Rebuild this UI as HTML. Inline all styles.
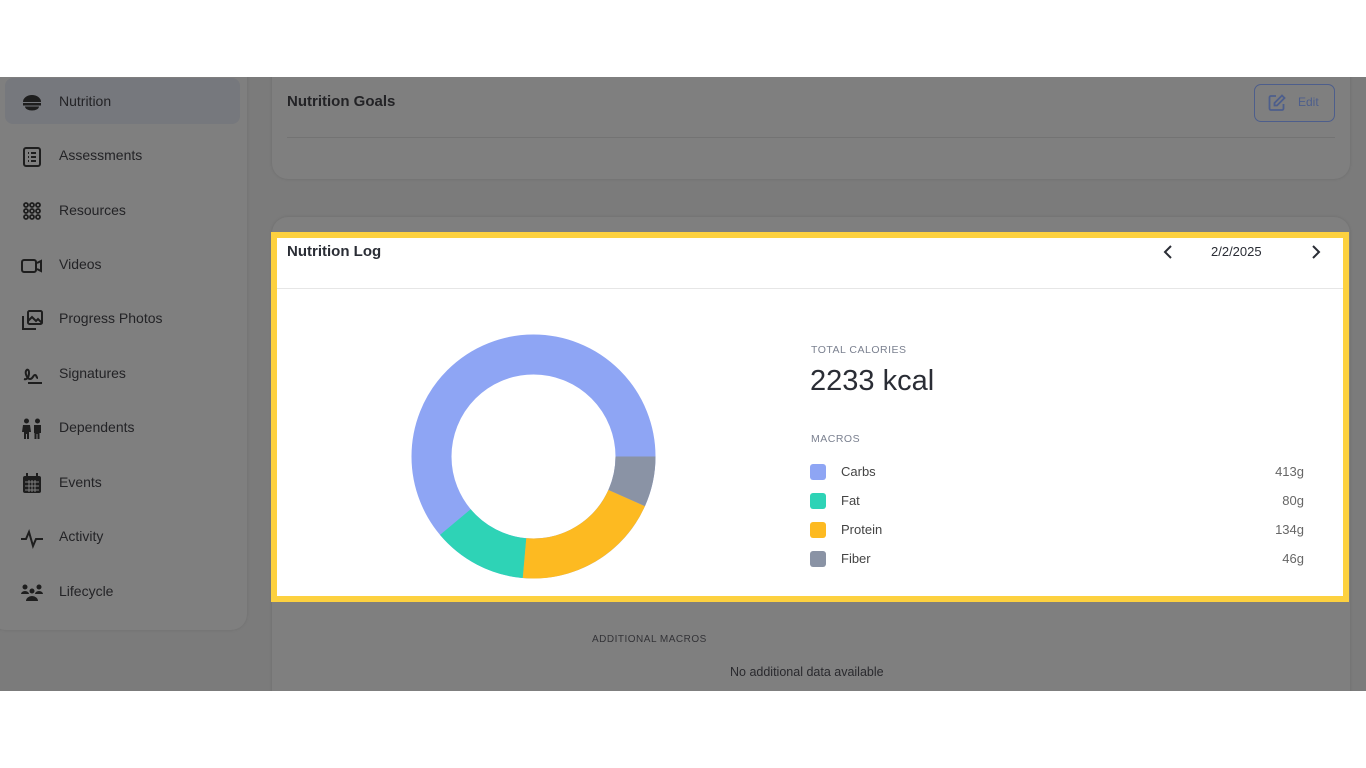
<!DOCTYPE html>
<html><head><meta charset="utf-8"><style>
*{margin:0;padding:0;box-sizing:border-box}
body{width:1366px;height:768px;background:#fff;font-family:"Liberation Sans",sans-serif;position:relative;overflow:hidden}
.app{position:absolute;left:0;top:77px;width:1366px;height:614px;background:#7b7b7b;overflow:hidden}
.side{position:absolute;left:-10px;top:-20px;width:257px;height:573px;background:#7f7f7f;border-radius:16px;box-shadow:0 0 3px rgba(0,0,0,.1)}
.sel{position:absolute;left:15px;top:21px;width:235px;height:46px;background:#76787d;border-radius:8px}
.item{position:absolute;left:59px;font-size:14px;color:#232326;white-space:nowrap}
.ic{position:absolute;left:20px;width:24px;height:24px}
.card1{position:absolute;left:272px;top:-20px;width:1078px;height:122px;background:#7f7f7f;border-radius:16px;box-shadow:0 0 3px rgba(0,0,0,.12)}
.card2{position:absolute;left:272px;top:140px;width:1078px;height:520px;background:#7f7f7f;border-radius:16px;box-shadow:0 0 3px rgba(0,0,0,.12)}
.hl{position:absolute;left:271px;top:232px;width:1078px;height:370px;border:6px solid #fdd13f;background:#fff}
.t{position:absolute;color:#2a2d35;white-space:nowrap}
</style></head><body>
<div class="app">
<div class="side">
<div class="sel"></div>
</div>
<div class="card1"></div>
<div style="position:absolute;left:287px;top:60px;width:1048px;height:1px;background:#737373"></div>
<div class="t" style="left:287px;top:16px;font-size:15px;font-weight:bold;color:#232326">Nutrition Goals</div>
<div style="position:absolute;left:1254px;top:7px;width:81px;height:38px;border:1.5px solid #4d5e8c;border-radius:7px"></div>
<svg style="position:absolute;left:1267px;top:16px" width="20" height="20" viewBox="0 0 20 20" fill="none" stroke="#4d5e8c" stroke-width="1.8"><path d="M9 3H4a1.5 1.5 0 0 0-1.5 1.5v11A1.5 1.5 0 0 0 4 17h11a1.5 1.5 0 0 0 1.5-1.5V11"/><path d="M15 2.5l2.5 2.5L10 12.5H7.5V10z"/></svg>
<div class="t" style="left:1298px;top:18px;font-size:12px;color:#4d5e8c">Edit</div>
<div class="card2"></div>
<div class="t" style="left:592px;top:557px;font-size:10px;letter-spacing:.5px;color:#333337">ADDITIONAL MACROS</div>
<div class="t" style="left:730px;top:588px;font-size:12.5px;color:#2a2a2e">No additional data available</div>
</div>
<div style="position:absolute;left:0;top:77px">
<svg class="ic" style="top:14px" viewBox="0 0 24 24" fill="#1e1e1e"><path d="M3 11a9 7 0 0 1 18 0z"/><rect x="3" y="12" width="18" height="2.5"/><path d="M5 15.5h14a7 4 0 0 1-14 0z"/></svg>
<div class="item" style="top:16px">Nutrition</div>
<svg class="ic" style="top:68px" viewBox="0 0 24 24" fill="none" stroke="#1e1e1e" stroke-width="2"><rect x="4" y="3" width="16" height="18" rx="2"/><path d="M8 8h1M11 8h5M8 12h1M11 12h5M8 16h1M11 16h5"/></svg>
<div class="item" style="top:70px">Assessments</div>
<svg class="ic" style="top:122px" viewBox="0 0 24 24" fill="none" stroke="#1e1e1e" stroke-width="1.8"><circle cx="6" cy="6" r="2"/><circle cx="12" cy="6" r="2"/><circle cx="18" cy="6" r="2"/><circle cx="6" cy="12" r="2"/><circle cx="12" cy="12" r="2"/><circle cx="18" cy="12" r="2"/><circle cx="6" cy="18" r="2"/><circle cx="12" cy="18" r="2"/><circle cx="18" cy="18" r="2"/></svg>
<div class="item" style="top:125px">Resources</div>
<svg class="ic" style="top:177px" viewBox="0 0 24 24" fill="none" stroke="#1e1e1e" stroke-width="2"><rect x="2" y="6" width="14" height="12" rx="2"/><path d="M17 9l4-2v10l-4-2"/></svg>
<div class="item" style="top:179px">Videos</div>
<svg class="ic" style="top:231px" viewBox="0 0 24 24" fill="none" stroke="#1e1e1e" stroke-width="2"><rect x="8" y="3" width="14" height="13" rx="1.5"/><path d="M8 13l4-4 4 4 2-2 4 4"/><path d="M3 8v13h13"/></svg>
<div class="item" style="top:233px">Progress Photos</div>
<svg class="ic" style="top:285px" viewBox="0 0 24 24" fill="none" stroke="#1e1e1e" stroke-width="2"><path d="M4 17c3 1 5-2 5-6s-2-4-3-2 1 8 4 8 3-4 5-4 1 3 3 3"/><path d="M8 21h14"/></svg>
<div class="item" style="top:288px">Signatures</div>
<svg class="ic" style="top:340px" viewBox="0 0 24 24" fill="#1e1e1e"><circle cx="6.5" cy="4" r="2.5"/><circle cx="17.5" cy="4" r="2.5"/><path d="M3 8h7l1 7H9v7H7v-5h-1v5H4v-7H2z"/><path d="M14 8h7v8h-1.5v6h-2v-5h-1v5h-2v-6H14z"/></svg>
<div class="item" style="top:342px">Dependents</div>
<svg class="ic" style="top:394px" viewBox="0 0 24 24" fill="#1e1e1e"><rect x="3" y="5" width="18" height="17" rx="2"/><rect x="6" y="2" width="2" height="4"/><rect x="16" y="2" width="2" height="4"/><path d="M5 11h14M5 15h14M5 19h14M9 9v12M12 9v12M15 9v12" stroke="#7f7f7f" stroke-width="1"/></svg>
<div class="item" style="top:397px">Events</div>
<svg class="ic" style="top:449px" viewBox="0 0 24 24" fill="none" stroke="#1e1e1e" stroke-width="2"><path d="M1 13h5l3-7 4 14 3-7h7"/></svg>
<div class="item" style="top:451px">Activity</div>
<svg class="ic" style="top:503px" viewBox="0 0 24 24" fill="#1e1e1e"><circle cx="5" cy="7" r="2.5"/><circle cx="19" cy="7" r="2.5"/><circle cx="12" cy="11" r="2.5"/><path d="M1 14a4 3 0 0 1 8 0zM15 14a4 3 0 0 1 8 0zM6 21a6 5 0 0 1 12 0z"/></svg>
<div class="item" style="top:506px">Lifecycle</div>
</div>
<div class="hl"></div>
<div style="position:absolute;left:277px;top:288px;width:1066px;height:1px;background:#e6e6e6"></div>
<div class="t" style="left:287px;top:243px;font-size:15px;font-weight:bold">Nutrition Log</div>
<svg style="position:absolute;left:1160px;top:244px" width="16" height="16" viewBox="0 0 16 16" fill="none" stroke="#2a2d35" stroke-width="2"><path d="M11 2L5 8l6 6"/></svg>
<div class="t" style="left:1211px;top:244px;font-size:13px">2/2/2025</div>
<svg style="position:absolute;left:1308px;top:244px" width="16" height="16" viewBox="0 0 16 16" fill="none" stroke="#2a2d35" stroke-width="2"><path d="M5 2l6 6-6 6"/></svg>
<svg style="position:absolute;left:411px;top:334px" width="245" height="245" viewBox="0 0 245 245">
<g transform="translate(122.5,122.5)" fill="none" stroke-width="40">
<circle r="102" stroke="#8ea5f4"/>
<circle r="102" stroke="#2ed3b6" stroke-dasharray="80.1 600" transform="rotate(95)"/>
<circle r="102" stroke="#fdba21" stroke-dasharray="126.4 600" transform="rotate(24)"/>
<circle r="102" stroke="#8a93a5" stroke-dasharray="42.7 600"/>
</g></svg>
<div class="t" style="left:811px;top:344px;font-size:10.5px;letter-spacing:.5px;color:#7b8190">TOTAL CALORIES</div>
<div class="t" style="left:810px;top:365px;font-size:29px">2233 kcal</div>
<div class="t" style="left:811px;top:433px;font-size:10.5px;letter-spacing:.5px;color:#7b8190">MACROS</div>
<div style="position:absolute;left:810px;top:464px;width:16px;height:16px;border-radius:3px;background:#8ea5f4"></div>
<div style="position:absolute;left:810px;top:493px;width:16px;height:16px;border-radius:3px;background:#2ed3b6"></div>
<div style="position:absolute;left:810px;top:522px;width:16px;height:16px;border-radius:3px;background:#fdba21"></div>
<div style="position:absolute;left:810px;top:551px;width:16px;height:16px;border-radius:3px;background:#8a93a5"></div>
<div class="t" style="left:841px;top:464px;font-size:13px;color:#444">Carbs</div>
<div class="t" style="left:841px;top:493px;font-size:13px;color:#444">Fat</div>
<div class="t" style="left:841px;top:522px;font-size:13px;color:#444">Protein</div>
<div class="t" style="left:841px;top:551px;font-size:13px;color:#444">Fiber</div>
<div class="t" style="right:62px;top:464px;font-size:13px;color:#666">413g</div>
<div class="t" style="right:62px;top:493px;font-size:13px;color:#666">80g</div>
<div class="t" style="right:62px;top:522px;font-size:13px;color:#666">134g</div>
<div class="t" style="right:62px;top:551px;font-size:13px;color:#666">46g</div>
</body></html>
